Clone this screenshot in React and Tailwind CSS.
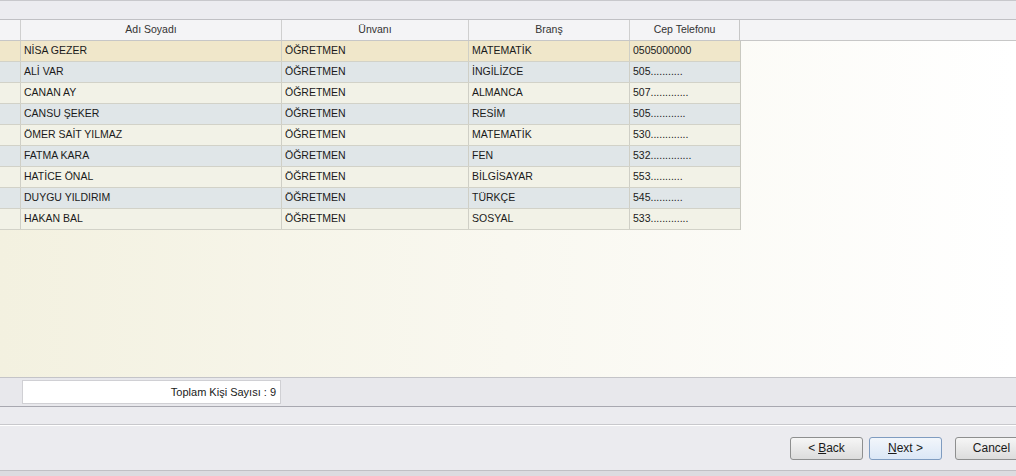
import React from "react";

const rows = [
  ["NİSA GEZER", "ÖĞRETMEN", "MATEMATİK", "0505000000"],
  ["ALİ VAR", "ÖĞRETMEN", "İNGİLİZCE", "505..........."],
  ["CANAN AY", "ÖĞRETMEN", "ALMANCA", "507............."],
  ["CANSU ŞEKER", "ÖĞRETMEN", "RESİM", "505............"],
  ["ÖMER SAİT YILMAZ", "ÖĞRETMEN", "MATEMATİK", "530............."],
  ["FATMA KARA", "ÖĞRETMEN", "FEN", "532.............."],
  ["HATİCE ÖNAL", "ÖĞRETMEN", "BİLGİSAYAR", "553..........."],
  ["DUYGU YILDIRIM", "ÖĞRETMEN", "TÜRKÇE", "545..........."],
  ["HAKAN BAL", "ÖĞRETMEN", "SOSYAL", "533............."],
];

const font = { fontFamily: "'Liberation Sans', Arial, sans-serif" };

function Btn({ children, blue }) {
  return (
    <div
      className={`h-[23px] flex items-center justify-center rounded-[3px] border text-[12px] text-[#1a1a1a] ${
        blue
          ? "bg-gradient-to-b from-[#f2f6fb] to-[#dbe7f6] border-[#7f9cc0]"
          : "bg-gradient-to-b from-[#f6f6f6] to-[#dcdcdc] border-[#8e8f8f]"
      }`}
    >
      {children}
    </div>
  );
}

export default function App() {
  return (
    <div
      className="w-[1016px] h-[476px] overflow-hidden bg-[#ebebef] flex flex-col text-[10.5px] text-[#1a1a1a]"
      style={font}
    >
      {/* top band */}
      <div className="h-[20px] shrink-0 bg-[#ececf0] border-t border-[#c8c8cc] border-b border-b-[#c0c0c4]"></div>

      {/* grid area */}
      <div className="h-[357px] shrink-0 flex flex-col bg-gradient-to-r from-[#f3f1e0] via-[#f9f8f0] to-[#ffffff]">
        {/* header */}
        <div className="flex h-[21px] border-b border-[#c7c7c7]">
          <div className="w-[740px] flex bg-[#f4f4f6] border-r border-[#c7c7c7]">
            <div className="w-[21px] border-r border-[#cfcfcf]"></div>
            <div className="w-[261px] border-r border-[#cfcfcf] flex items-center justify-center text-[#333]">Adı Soyadı</div>
            <div className="w-[187px] border-r border-[#cfcfcf] flex items-center justify-center text-[#333]">Ünvanı</div>
            <div className="w-[161px] border-r border-[#cfcfcf] flex items-center justify-center text-[#333]">Branş</div>
            <div className="flex-1 flex items-center justify-center text-[#333]">Cep Telefonu</div>
          </div>
          <div className="flex-1 bg-[#f4f4f6]"></div>
        </div>
        {/* rows */}
        <div className="w-[741px] flex flex-col border-r border-[#c9c9c0]">
          {rows.map((r, i) => {
            const bg =
              i === 0 ? "bg-[#f0e7ca]" : i % 2 === 1 ? "bg-[#e0e6e8]" : "bg-[#f2f2e7]";
            return (
              <div key={i} className={`flex h-[21px] border-b border-[#d2d2c8] ${bg}`}>
                <div className="w-[21px] border-r border-[#cfcfc6]"></div>
                <div className="w-[261px] border-r border-[#cfcfc6] flex items-center pl-[3px]">{r[0]}</div>
                <div className="w-[187px] border-r border-[#cfcfc6] flex items-center pl-[3px]">{r[1]}</div>
                <div className="w-[161px] border-r border-[#cfcfc6] flex items-center pl-[3px]">{r[2]}</div>
                <div className="flex-1 flex items-center pl-[3px]">{r[3]}</div>
              </div>
            );
          })}
        </div>
      </div>

      {/* footer with total */}
      <div className="h-[30px] shrink-0 bg-[#e8e8ec] border-t border-[#c4c4c8] border-b border-b-[#a8a8b0] flex items-center">
        <div className="ml-[22px] w-[259px] h-[24px] bg-white border border-[#d0d0d4] flex items-center justify-end pr-[4px] text-[11px]">
          Toplam Kişi Sayısı : 9
        </div>
      </div>

      {/* blank band */}
      <div className="h-[18px] shrink-0 bg-[#ebebef] border-b border-[#c8c8cc]"></div>

      {/* button area */}
      <div className="h-[45px] shrink-0 bg-[#ebebef] border-t border-white flex items-center pl-[790px]">
        <div className="w-[73px] shrink-0">
          <Btn>&lt; <span className="underline ml-[3px]">B</span>ack</Btn>
        </div>
        <div className="w-[73px] shrink-0 ml-[6px]">
          <Btn blue>
            <span className="underline">N</span>ext &gt;
          </Btn>
        </div>
        <div className="w-[73px] shrink-0 ml-[13px]">
          <Btn>Cancel</Btn>
        </div>
      </div>

      <div className="flex-1 bg-[#dcdce0] border-t border-[#c0c0c4]"></div>
    </div>
  );
}
